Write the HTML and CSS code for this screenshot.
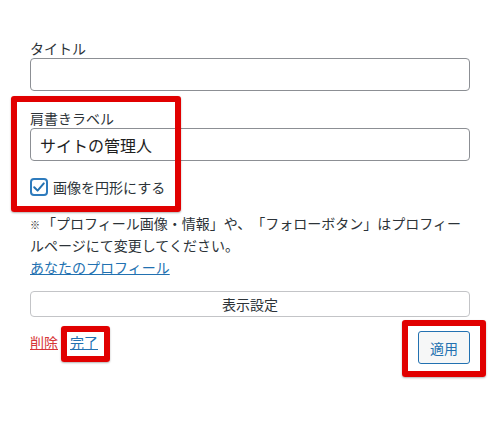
FILE: index.html
```html
<!DOCTYPE html>
<html lang="ja">
<head>
    <meta charset="UTF-8">
    <title>プロフィール ウィジェット</title>
    <link rel="stylesheet" href="styles.css">
</head>
<body>
    <div class="widget-form">
        <div class="field">
            <label class="field-label" for="title">タイトル</label>
            <input class="text-input" id="title" type="text" value="">
        </div>

        <div class="field">
            <label class="field-label" for="caption">肩書きラベル</label>
            <input class="text-input" id="caption" type="text" value="サイトの管理人">
        </div>

        <label class="check-row">
            <span class="check-box">
                <svg width="14" height="14" viewBox="0 0 14 14"><path d="M2.2 7.2 L5.6 10.6 L11.8 3.4" fill="none" stroke="#2271b1" stroke-width="2" stroke-linecap="round" stroke-linejoin="round"/></svg>
            </span>
            <span>画像を円形にする</span>
        </label>

        <p class="note">
            <span class="kome">※</span>「プロフィール画像・情報」や、「フォローボタン」はプロフィールページにて変更してください。<br>
            <a href="#" class="profile-link">あなたのプロフィール</a>
        </p>

        <button type="button" class="toggle-button">表示設定</button>

        <div class="actions">
            <div class="action-links">
                <a href="#" class="delete-link">削除</a>
                <a href="#" class="done-link">完了</a>
            </div>
            <button type="button" class="apply-button">適用</button>
        </div>
    </div>

    <!-- annotation frames -->
    <div class="mark mark-caption"></div>
    <div class="mark mark-done"></div>
    <div class="mark mark-apply"></div>
</body>
</html>
```

FILE: styles.css
```css
body {
    margin: 0;
    background-color: #fff;
    color: #1e1e1e;
    font-family: "Noto Sans CJK JP", "Noto Sans", sans-serif;
    font-size: 14px;
    text-spacing-trim: space-all;
}

.widget-form {
    width: 440px;
    padding: 38px 33px 0 30px;
}

.field {
    margin-bottom: 17px;
}

.field-label {
    display: block;
    line-height: 20px;
    color: #2c3338;
}

.text-input {
    display: block;
    box-sizing: border-box;
    width: 100%;
    height: 33px;
    margin: 0;
    padding: 0 9px;
    border: 1px solid #8c8f94;
    border-radius: 4px;
    font-family: inherit;
    font-size: 16px;
    color: #1e1e1e;
    background-color: #fff;
}

.check-row {
    display: flex;
    align-items: center;
    gap: 5px;
    margin-top: -1px;
    line-height: 20px;
    color: #2c3338;
}

.check-box {
    box-sizing: border-box;
    width: 18px;
    height: 18px;
    border: 2px solid #2e7bbd;
    border-radius: 4px;
    display: flex;
    align-items: center;
    justify-content: center;
}

.note {
    margin: 15px 0 0;
    line-height: 22px;
    color: #2c3338;
}

.kome {
    display: inline-block;
    font-size: 10px;
    line-height: 14px;
    margin-right: 2px;
    color: #1e1e1e;
}

.profile-link {
    color: #2271b1;
}

.toggle-button {
    display: block;
    width: 100%;
    height: 26px;
    margin-top: 13px;
    padding: 0;
    border: 1px solid #c3c4c7;
    border-radius: 4px;
    background-color: #fff;
    font-family: inherit;
    font-size: 14px;
    color: #2c3338;
}

.actions {
    display: flex;
    justify-content: space-between;
    align-items: flex-start;
    margin-top: 14px;
}

.action-links {
    display: flex;
    gap: 12px;
    line-height: 22px;
}

.delete-link {
    color: #d63638;
}

.done-link {
    color: #2271b1;
}

.apply-button {
    height: 33px;
    padding: 0 11px;
    border: 1px solid #2271b1;
    border-radius: 3px;
    background-color: #f6f7f7;
    color: #2271b1;
    font-family: inherit;
    font-size: 14px;
}

.mark {
    position: absolute;
    box-sizing: border-box;
    border: 6px solid #e10000;
    border-radius: 3px;
    box-shadow: 0 1px 2px rgba(0, 0, 0, 0.3);
}

.mark-caption {
    left: 11px;
    top: 96px;
    width: 170px;
    height: 116px;
}

.mark-done {
    left: 61px;
    top: 326px;
    width: 49px;
    height: 36px;
}

.mark-apply {
    left: 402px;
    top: 320px;
    width: 84px;
    height: 57px;
}
```
